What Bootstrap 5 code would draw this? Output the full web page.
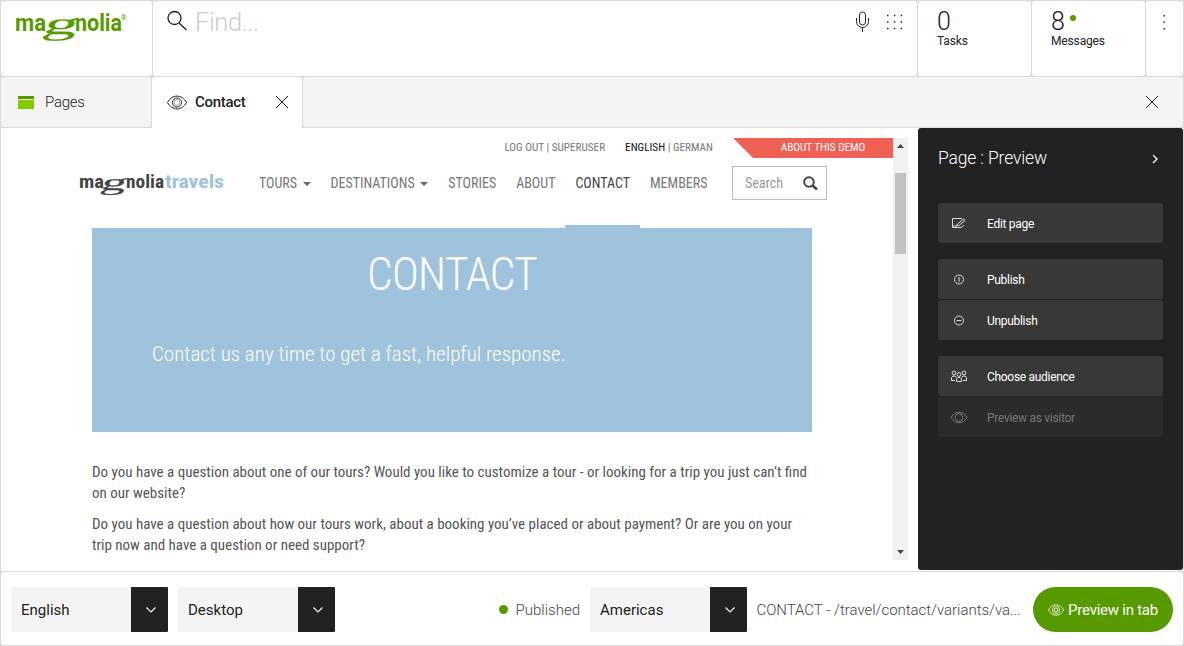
<!DOCTYPE html>
<html lang="en">
<head>
<meta charset="utf-8">
<meta name="viewport" content="width=device-width, initial-scale=1">
<title>Magnolia – Contact</title>
<link href="https://cdn.jsdelivr.net/npm/bootstrap@5.3.0/dist/css/bootstrap.min.css" rel="stylesheet">
<style>
body{font-family:Roboto,"Liberation Sans",sans-serif;background:#dadada;color:#222;height:646px;overflow:hidden;line-height:1.2}
svg{display:block;flex:none;overflow:visible}
.shell{width:1184px;height:646px;padding:1px;gap:1px}
.tile{background:#fff;border-radius:3px}
.topbar{height:75px;gap:1px}
.logo-tile{width:151px;padding:11px 0 0 14px}
.glass{margin:7px 0 0 15px}
.find{font-size:25.5px;font-weight:300;color:#ccc;line-height:32px;letter-spacing:-.4px;margin:5px 0 0 7px;width:640px}
.tools{margin:8px 1px 0 auto}
.count-tile{width:113px;padding:7px 0 0 19px}
.count{font-size:25px;font-weight:300;line-height:27px}
.count-label{font-size:12px;line-height:13px;letter-spacing:-.15px}
.dot{background:#579a00;border-radius:50%;width:9px;height:9px}
.dot-new{width:6px;height:6px;margin:7px 0 0 5px}
.more-tile{width:37px}
.tabs{height:50px}
.tab-pages{width:150px;background:#f4f4f4;padding-left:17px;font-size:15px;font-weight:300;margin-right:1px;letter-spacing:-.25px}
.tab-contact{width:150px;height:51px;padding:0 0 2px 15px;font-size:15px;letter-spacing:-.3px;font-weight:500;margin-right:1px;border-radius:3px 3px 0 0}
.tab-contact .x-mark{margin-right:14px}
.tab-rest{background:#f4f4f4;padding-right:25px}
.workspace{height:443px;background:#fff}
.preview{width:892px;margin-top:10px;height:422px;overflow:hidden;font-family:"Roboto Condensed",Roboto,"Liberation Sans Narrow",sans-serif;font-stretch:condensed;color:#555}
.meta-row{height:20px;font-size:11.2px;line-height:19px;color:#777}
.lang{margin:0 20px}
.lang b{color:#111;font-weight:400}
.demo{width:160px;height:20px;background:#ef6155;color:#fff;clip-path:polygon(0 0,100% 0,100% 100%,20px 100%);padding-left:20px;font-size:11.2px}
.nav-row{height:70px;padding-left:79px}
.site-link{font-size:14px;height:70px;line-height:51px;color:#777;padding:0 10px;white-space:nowrap}
.site-link.current{color:#444;border-bottom:3px solid #9fc2dd}
.caret{display:inline-block;border:4px solid transparent;border-top-color:#666;border-bottom:0;vertical-align:middle;margin-left:2.300px}
.search{width:95px;height:34px;border:1px solid #bbb;font-size:14px;color:#999;margin:8px 0 0 auto;padding:0 8px 0 12px}
.hero{width:720px;height:204px;margin-left:91px;background:#9fc2dd;color:#fff;font-weight:300}
.hero h1{font-size:45.5px;letter-spacing:-.8px;font-weight:300;line-height:50px;padding-top:22px;margin:0 0 41px}
.hero p{font-size:21px;line-height:26px;margin:0 0 0 60px}
.copy{width:728px;margin:30px 0 0 91px;font-size:15px;line-height:21px}
.copy p{margin:0 0 10px;white-space:nowrap}
.track{width:15px;height:422px;margin-top:10px;background:#f1f1f1}
.arrow-up{height:15px;padding-top:6px}
.thumb{width:11px;height:81px;background:#c1c1c1;margin-top:20px}
.action-panel{width:265px;height:442px;background:#222;border-radius:3px;padding:20px;color:#fff}
.panel-title{font-size:17.5px;letter-spacing:-.15px;font-weight:300;height:20px;line-height:20px;margin-bottom:35px}
.action{height:40px;background:#383838;border-radius:3px;font-size:12px;letter-spacing:-.3px;padding:2px 0 0 12px}
.action svg{margin-right:19px}
.action + .joined{margin-top:1px}
.action.off{background:#2b2b2b;color:#777}
.footer{height:73px;border-radius:3px;padding:15px 10px 0}
.pick{height:45px;width:157px;background:#f4f4f4;font-size:15px}
.pick + .pick,.soft + .pick{margin-left:10px}
.pick span{padding-left:10px}
.pick b{width:37px;background:#222;border-radius:0 1px 1px 0;padding-left:2px}
.soft{font-size:15px;font-weight:300;color:#444;height:45px;white-space:nowrap}
.path{width:286px;padding-left:9.500px;letter-spacing:-.03px}
.go{width:140px;height:45px;border-radius:23px;background:#579a00;color:#fff;font-size:15px;letter-spacing:-.25px}
</style>
</head>
<body>
<div class="shell d-flex flex-column">
  <header class="topbar d-flex">
    <div class="tile logo-tile">
      <svg width="116" height="34" fill="#579a00" font-family="Roboto" font-weight="700" font-size="24">
        <text x="0" y="19" textLength="31" lengthAdjust="spacingAndGlyphs">ma</text>
        <text transform="translate(26.500 21.500) skewX(-20) scale(2.200 1)" font-family="Liberation Serif" font-weight="400" font-size="31" stroke="#579a00" stroke-width=".2">g</text>
        <text x="60" y="19" textLength="47" lengthAdjust="spacingAndGlyphs">nolia</text>
        <text x="106" y="8" font-size="7" font-weight="400">®</text>
      </svg>
    </div>
    <div class="tile flex-grow-1 d-flex align-items-start">
      <svg class="glass" width="20" height="24" viewBox="0 0 20 24" fill="none" stroke="#222" stroke-width="1.300"><circle cx="6.500" cy="10" r="6.500"/><path d="m11 15 7.500 7"/></svg>
      <div class="find">Find...</div>
      <svg width="60" height="24" class="tools" viewBox="0 0 60 24" fill="none" stroke="#222"><rect x="3.500" y="3" width="6" height="13" rx="3"/><path d="M.5 9v3.500a6 6 0 0 0 12 0V9M6.500 18.500V23"/><g stroke-width="1.500" stroke-dasharray="1.500 5.300"><path d="M31 6.500h16M31 13h16M31 19.500h16"/></g></svg>
    </div>
    <div class="tile count-tile"><div class="count">0</div><div class="count-label">Tasks</div></div>
    <div class="tile count-tile"><div class="count d-flex">8<i class="dot dot-new"></i></div><div class="count-label">Messages</div></div>
    <div class="tile more-tile"><svg width="37" height="40" fill="#222"><path d="M17.500 14h1.400v1.400h-1.400zM17.500 20.500h1.400v1.400h-1.400zM17.500 27h1.400v1.400h-1.400z"/></svg></div>
  </header>
  <nav class="tabs d-flex">
    <div class="tile tab-pages d-flex align-items-center"><svg width="16" height="13" class="me-2"><path fill="#81cc00" d="M0 0h16v13H0z"/><path fill="#579a00" d="M0 0h16v3H0z"/><path stroke="#f4f4f4" d="M0 3.500h16"/></svg><span style="padding-left:3px">Pages</span></div>
    <div class="tile tab-contact d-flex align-items-center"><svg width="20" height="16" class="me-2" fill="none" stroke="#222" viewBox="0 0 20 16"><path d="M.5 8.500C5 0 15 0 19.500 8.500 15 17 5 17 .5 8.500z"/><circle cx="10" cy="8.500" r="4.500"/><circle cx="10" cy="8.500" r="2.800" stroke-width=".4"/></svg><span>Contact</span><svg class="ms-auto x-mark" width="12" height="12" stroke="#222"><path d="m0 0 12 12M12 0 0 12"/></svg></div>
    <div class="tile tab-rest flex-grow-1 d-flex align-items-center justify-content-end"><svg width="12" height="12" stroke="#222"><path d="m0 0 12 12M12 0 0 12"/></svg></div>
  </nav>
  <main class="workspace d-flex">
    <section class="preview">
      <div class="meta-row d-flex justify-content-end"><span>LOG OUT | SUPERUSER</span><span class="lang"><b>ENGLISH</b> | GERMAN</span><span class="demo text-center">ABOUT THIS DEMO</span></div>
      <div class="nav-row d-flex" style="padding-right:66px">
        <svg width="145" height="30" class="mt-3 me-4" font-family="Roboto" font-weight="700" font-size="18" fill="#444">
          <text x="-1" y="14" textLength="25" lengthAdjust="spacingAndGlyphs">ma</text>
          <text transform="translate(19.500 16) skewX(-20) scale(2.200 1)" font-family="Liberation Serif" font-weight="400" font-size="23" stroke="#444" stroke-width=".2">g</text>
          <text x="46" y="14" textLength="38" lengthAdjust="spacingAndGlyphs">nolia</text><text x="85" y="14" fill="#9fc2dd" textLength="59" lengthAdjust="spacingAndGlyphs">travels</text>
        </svg>
        <span class="site-link">TOURS <i class="caret"></i></span><span class="site-link">DESTINATIONS <i class="caret"></i></span><span class="site-link">STORIES</span><span class="site-link">ABOUT</span><span class="site-link current">CONTACT</span><span class="site-link">MEMBERS</span>
        <div class="search d-flex align-items-center justify-content-between">Search<svg width="15" height="15" fill="none" stroke="#444"><circle cx="6" cy="6" r="4.800" stroke-width="2"/><path stroke-width="2.500" d="m9.500 9.500 4.500 4"/></svg></div>
      </div>
      <div class="hero"><h1 class="text-center">CONTACT</h1><p>Contact us any time to get a fast, helpful response.</p></div>
      <div class="copy"><p>Do you have a question about one of our tours? Would you like to customize a tour - or looking for a trip you just can’t find<br>on our website?</p><p>Do you have a question about how our tours work, about a booking you’ve placed or about payment? Or are you on your<br>trip now and have a question or need support?</p></div>
    </section>
    <div class="track d-flex flex-column align-items-center"><div class="arrow-up"><svg width="7" height="4" fill="#444"><path d="M0 4 3.500 0 7 4z"/></svg></div><div class="thumb"></div><div class="mt-auto pb-1"><svg width="7" height="6" fill="#444"><path d="m0 0 3.500 4L7 0z"/></svg></div></div>
    <aside class="action-panel ms-auto">
      <div class="panel-title d-flex justify-content-between align-items-center">Page : Preview<svg width="12" height="10" fill="none" stroke="#fff" stroke-width="1.300"><path d="m2 2 4 4-4 4"/></svg></div>
      <div class="action d-flex align-items-center mb-3"><svg width="18" height="14" fill="none" stroke="#ddd"><path d="M12 1.500H2.500v9h9L14 8M6 9l1.500-2 6-5L15 3.500 9 8.500zM2.500 9H6"/></svg>Edit page</div>
      <div class="action d-flex align-items-center"><svg width="18" height="14" fill="none" stroke="#ddd"><circle cx="9" cy="6.500" r="4.500"/><path d="M9 4v5"/></svg>Publish</div>
      <div class="action joined d-flex align-items-center mb-3"><svg width="18" height="14" fill="none" stroke="#ddd"><circle cx="9" cy="6.500" r="4.500"/><path d="M6.500 6.500h5"/></svg>Unpublish</div>
      <div class="action d-flex align-items-center"><svg width="18" height="14" fill="none" stroke="#ddd"><circle cx="4" cy="3" r="1.900"/><circle cx="14" cy="3" r="1.900"/><circle cx="9" cy="4.500" r="1.900"/><path d="M5 10.500H1.500V7.500L3 6h2L6.500 7.500M13 10.500h3.500V7.500L15 6h-2L11.500 7.500M6.500 11.500V9L8 7.500h2L11.500 9v2.500z"/></svg>Choose audience</div>
      <div class="action joined off d-flex align-items-center"><svg width="18" height="14" fill="none" stroke="#777"><path d="M1 6.500c4-7 12-7 16 0-4 7-12 7-16 0z"/><circle cx="9" cy="6.500" r="3.800"/></svg>Preview as visitor</div>
    </aside>
  </main>
  <footer class="tile footer d-flex">
    <div class="pick d-flex align-items-stretch"><span class="flex-grow-1 align-self-center">English</span><b class="d-flex align-items-center justify-content-center"><svg width="12" height="7" fill="none" stroke="#fff" stroke-width="1.200"><path d="m1.500 1.500 4.500 4.500L10.500 1.500"/></svg></b></div>
    <div class="pick d-flex align-items-stretch"><span class="flex-grow-1 align-self-center">Desktop</span><b class="d-flex align-items-center justify-content-center"><svg width="12" height="7" fill="none" stroke="#fff" stroke-width="1.200"><path d="m1.500 1.500 4.500 4.500L10.500 1.500"/></svg></b></div>
    <div class="soft ms-auto d-flex align-items-center"><i class="dot me-2"></i>Published</div>
    <div class="pick d-flex align-items-stretch"><span class="flex-grow-1 align-self-center">Americas</span><b class="d-flex align-items-center justify-content-center"><svg width="12" height="7" fill="none" stroke="#fff" stroke-width="1.200"><path d="m1.500 1.500 4.500 4.500L10.500 1.500"/></svg></b></div>
    <div class="soft path d-flex align-items-center">CONTACT - /travel/contact/variants/va...</div>
    <div class="go d-flex align-items-center justify-content-center"><svg width="16" height="12" class="me-1" fill="none" stroke="#fff" stroke-width=".8"><path d="M.5 6c3.500-7 11.500-7 15 0-3.500 7-11.500 7-15 0z"/><circle cx="8" cy="6" r="3.600"/><circle cx="8" cy="6" r="1.800"/></svg>Preview in tab</div>
  </footer>
</div>
<script src="https://cdn.jsdelivr.net/npm/bootstrap@5.3.0/dist/js/bootstrap.bundle.min.js"></script>
</body>
</html>
